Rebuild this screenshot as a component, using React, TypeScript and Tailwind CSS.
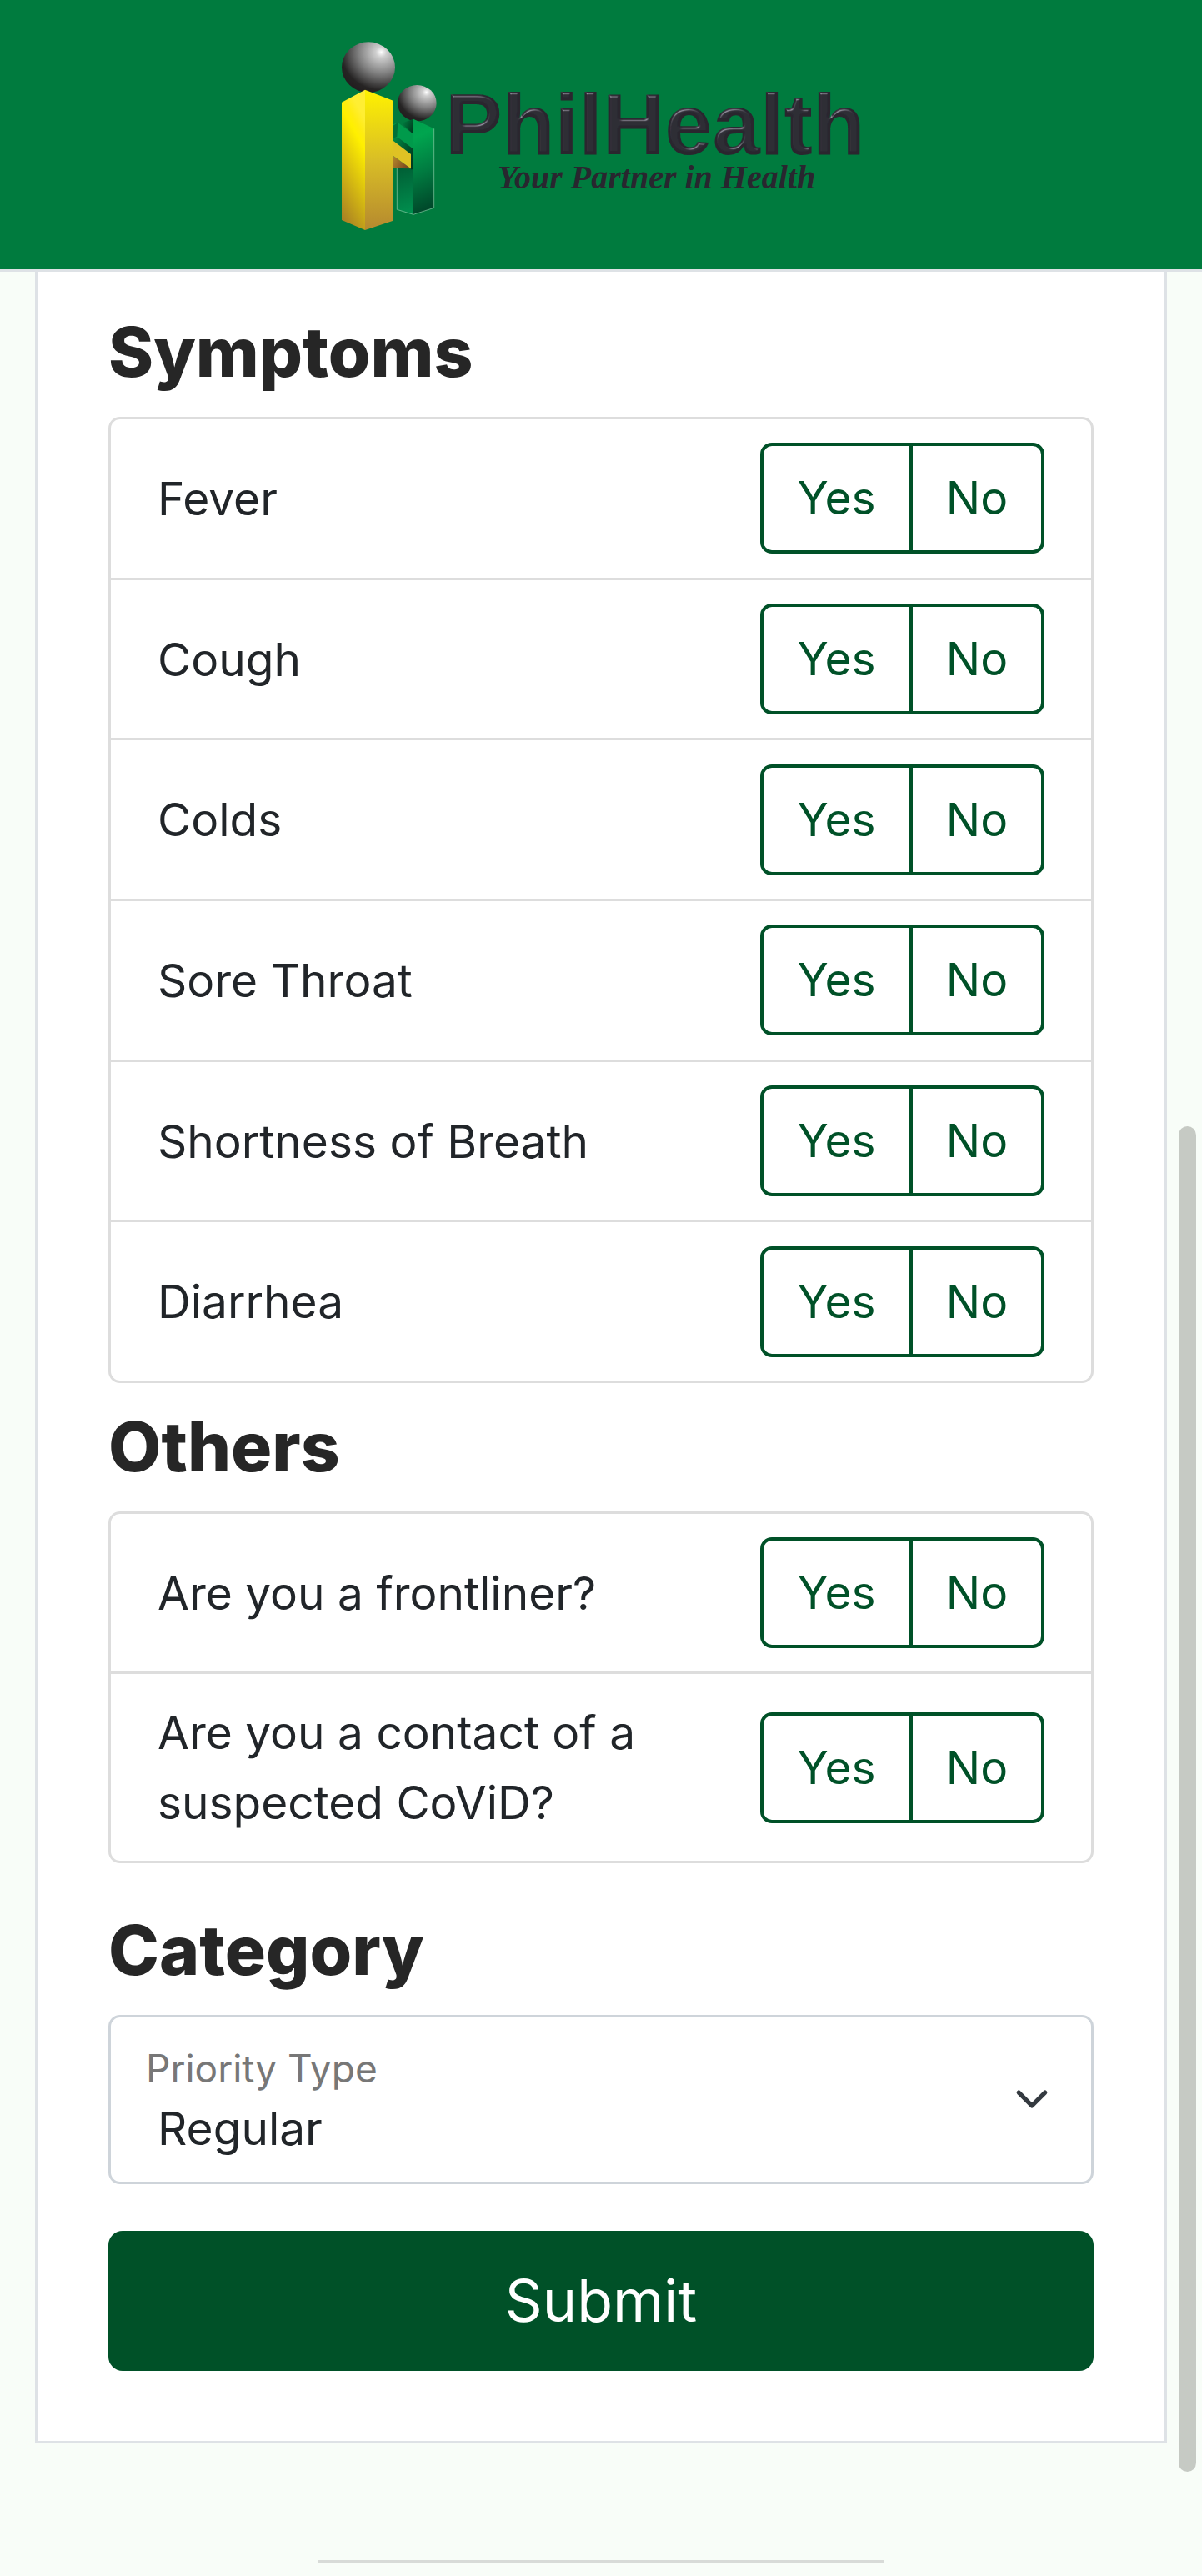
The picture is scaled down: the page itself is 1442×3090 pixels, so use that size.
import { useState } from "react";

const symptoms = ["Fever", "Cough", "Colds", "Sore Throat", "Shortness of Breath", "Diarrhea"];

function Logo() {
  return (
    <svg viewBox="398 50 646 227" className="w-[646px] max-w-full" role="img" aria-label="PhilHealth, Your Partner in Health">
      <defs>
        <radialGradient id="ball" cx="0.74" cy="0.2" r="0.85" fx="0.74" fy="0.2">
          <stop offset="0" stopColor="#ffffff" />
          <stop offset="0.12" stopColor="#cfcfcf" />
          <stop offset="0.5" stopColor="#808080" />
          <stop offset="0.88" stopColor="#262424" />
          <stop offset="1" stopColor="#231f20" />
        </radialGradient>
        <linearGradient id="yellowLeft" x1="0.3" y1="0" x2="0" y2="1">
          <stop offset="0" stopColor="#ffee33" />
          <stop offset="0.12" stopColor="#ffec10" />
          <stop offset="0.2" stopColor="#fff000" />
          <stop offset="1" stopColor="#a07428" />
        </linearGradient>
        <linearGradient id="yellowRight" x1="0" y1="0" x2="0" y2="1">
          <stop offset="0" stopColor="#fff200" />
          <stop offset="0.5" stopColor="#d9be26" />
          <stop offset="1" stopColor="#b5892f" />
        </linearGradient>
        <linearGradient id="yellowUnder" x1="0" y1="0" x2="1" y2="0.4">
          <stop offset="0" stopColor="#b58a2c" />
          <stop offset="1" stopColor="#7a4520" />
        </linearGradient>
        <linearGradient id="greenRight" x1="0" y1="0" x2="0.1" y2="1">
          <stop offset="0" stopColor="#009e4c" />
          <stop offset="0.2" stopColor="#00a54f" />
          <stop offset="0.6" stopColor="#007a40" />
          <stop offset="1" stopColor="#00482a" />
        </linearGradient>
        <linearGradient id="greenLeft" x1="0.4" y1="0" x2="0.5" y2="1">
          <stop offset="0" stopColor="#005c34" />
          <stop offset="1" stopColor="#008f4e" />
        </linearGradient>
        <linearGradient id="greenDark" x1="0" y1="0" x2="1" y2="0.6">
          <stop offset="0" stopColor="#008a46" />
          <stop offset="1" stopColor="#003c20" />
        </linearGradient>
        <filter id="bevel" x="-5%" y="-10%" width="110%" height="120%">
          <feGaussianBlur in="SourceAlpha" stdDeviation="1.4" result="soft" />
          <feSpecularLighting in="soft" surfaceScale="4" specularConstant="1" specularExponent="22" lightingColor="#9a96a4" result="light">
            <feDistantLight azimuth="245" elevation="24" />
          </feSpecularLighting>
          <feComposite in="light" in2="SourceAlpha" operator="in" result="edge" />
          <feComposite in="SourceGraphic" in2="edge" operator="arithmetic" k1="0" k2="1" k3="0.8" k4="0" />
        </filter>
      </defs>
      <g transform="translate(390 30) scale(0.33333)">
        <ellipse cx="156" cy="152" rx="96" ry="91" fill="url(#ball)" />
        <ellipse cx="331" cy="281" rx="70" ry="65" fill="url(#ball)" />
        <path d="M259 500H318V682L259 664Z" fill="url(#greenLeft)" />
        <path d="M245 358L262 351L318 393V455L245 410Z" fill="#009a4b" />
        <path d="M245 362L262 351L259 402L245 408Z" fill="#007038" />
        <path d="M274 353L318 338V393Z" fill="url(#greenDark)" />
        <path d="M245 406L262 404L318 446V520H309V465L245 416Z" fill="url(#greenDark)" />
        <path d="M318 338L392 373V658L318 682Z" fill="url(#greenRight)" />
        <path d="M259 515V664L318 682L392 658V373" fill="none" stroke="#8fd0aa" strokeWidth="2" />
        <path d="M245 470L309 517L245 515Z" fill="url(#yellowUnder)" />
        <path d="M245 416L309 465V517L245 470Z" fill="#dfc224" />
        <path d="M60 278L144 233V738L60 702Z" fill="url(#yellowLeft)" />
        <path d="M144 233L245 272V704L144 738Z" fill="url(#yellowRight)" />
      </g>
      <text x="534" y="185" fill="#29262f" filter="url(#bevel)" className="font-['Liberation_Sans',sans-serif] text-[103px] font-bold">
        PhilHealth
      </text>
      <text x="597" y="226" fill="#29262f" className="font-['Liberation_Serif',serif] text-[40px] font-bold italic">
        Your Partner in Health
      </text>
    </svg>
  );
}

function Choice({ name, label, value, className }: { name: string; label: string; value: string; className: string }) {
  const id = `${name}-${value}`;
  return (
    <>
      <input type="radio" id={id} name={name} value={value} className="peer sr-only" />
      <label
        htmlFor={id}
        className={`flex cursor-pointer items-center justify-center border-4 border-[#005128] py-[22px] leading-[81px] text-[#005128] ${className}`}
      >
        {label}
      </label>
    </>
  );
}

function Question({ name, text }: { name: string; text: string }) {
  return (
    <li className="flex flex-1 items-center justify-between gap-14 px-14 py-7">
      <span id={`${name}-text`} className="max-w-[620px]">
        {text}
      </span>
      <div role="radiogroup" aria-labelledby={`${name}-text`} className="relative flex shrink-0">
        <Choice name={name} value="yes" label="Yes" className="w-[183px] rounded-l-[14px]" />
        <Choice name={name} value="no" label="No" className="-ml-1 w-[162px] rounded-r-[14px]" />
      </div>
    </li>
  );
}

function Heading({ children }: { children: string }) {
  return <h2 className="text-[82px] leading-[98px] font-extrabold text-[#262626]">{children}</h2>;
}

export default function App() {
  const [priority, setPriority] = useState("Regular");
  return (
    <div className="relative min-h-screen bg-[#f8fdf8] font-[Inter,sans-serif] text-[55px] leading-[84px] text-[#212529]">
      <header className="flex justify-center border-b-[3px] border-[#dee2e6] bg-[#007b3e] pt-[50px] pb-[46px]">
        <Logo />
      </header>

      <main className="mx-[42px] border-x-[3px] border-b-[3px] border-[#dee2e6] bg-white px-[85px] pt-12 pb-[84px]">
        <form onSubmit={(e) => e.preventDefault()}>
          <Heading>Symptoms</Heading>
          <ul className="mt-7 flex min-h-[1159px] flex-col divide-y-[3px] divide-[#dddddd] rounded-[14px] border-[3px] border-[#dddddd]">
            {symptoms.map((s, i) => (
              <Question key={s} name={`symptom-${i}`} text={s} />
            ))}
          </ul>

          <div className="mt-7">
            <Heading>Others</Heading>
          </div>
          <ul className="mt-7 flex flex-col divide-y-[3px] divide-[#dddddd] rounded-[14px] border-[3px] border-[#dddddd]">
            <Question name="frontliner" text="Are you a frontliner?" />
            <Question name="contact" text="Are you a contact of a suspected CoViD?" />
          </ul>

          <div className="mt-14">
            <Heading>Category</Heading>
          </div>
          <div className="relative mt-7">
            <select
              id="priority"
              value={priority}
              onChange={(e) => setPriority(e.target.value)}
              className="block w-full appearance-none rounded-[14px] border-[3px] border-[#ced4da] bg-white pt-[91px] pr-32 pb-[22px] pl-14 leading-[84px]"
            >
              <option>Regular</option>
              <option>Senior Citizen</option>
            </select>
            <label htmlFor="priority" className="pointer-events-none absolute top-7 left-[45px] text-[46px] leading-[72px] text-[#777777]">
              Priority Type
            </label>
            <svg viewBox="0 0 16 16" className="pointer-events-none absolute top-[80px] right-[53px] size-[42px]" aria-hidden="true">
              <path d="m2 5 6 6 6-6" fill="none" stroke="#343a40" strokeWidth="2" strokeLinecap="round" strokeLinejoin="round" />
            </svg>
          </div>

          <button type="submit" className="mt-14 w-full rounded-[17px] bg-[#005128] py-8 text-[70px] leading-[104px] text-white">
            Submit
          </button>
        </form>
      </main>

      <footer className="flex justify-center pt-[140px]">
        <hr className="w-[47%] border-t-4 border-[#d8dbd8]" />
      </footer>

      <div className="absolute top-[1351px] right-[7px] h-[1614px] w-[21px] rounded-full bg-[#c6cac4]" aria-hidden="true" />
    </div>
  );
}
